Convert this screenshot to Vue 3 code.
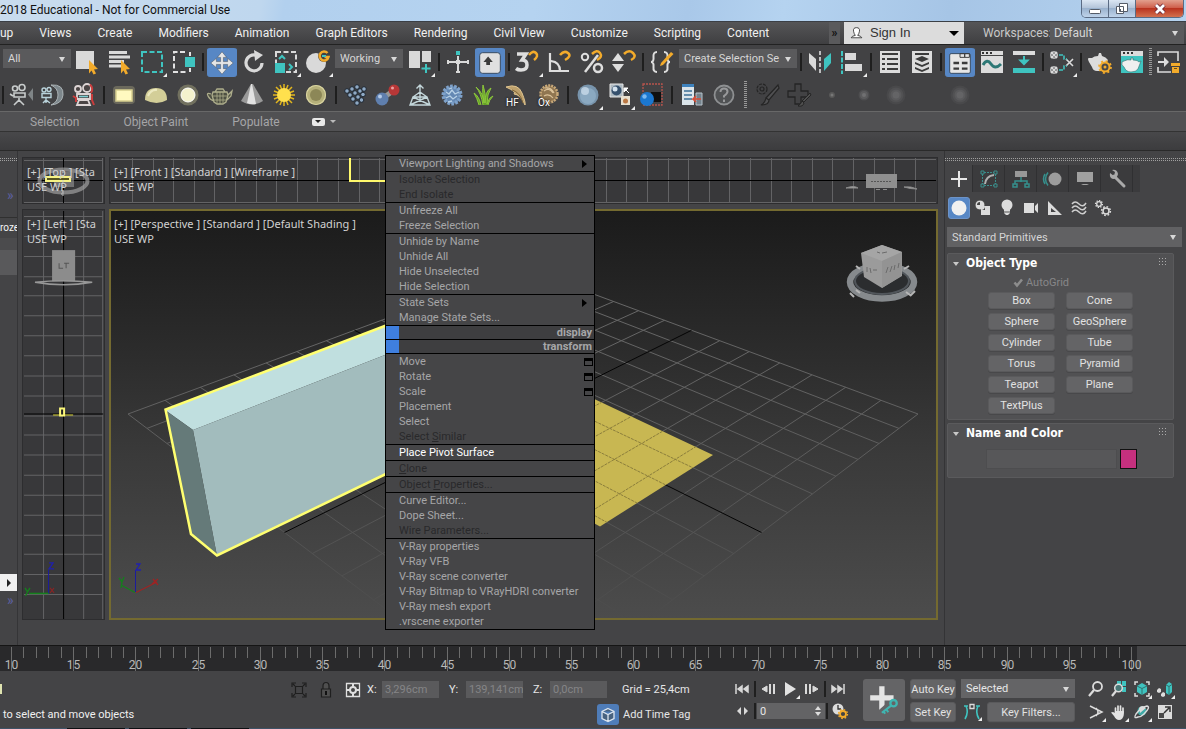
<script setup>
import { h } from 'vue'

const icons = {
  select: '<rect x="4" y="5" width="18" height="18" fill="#d9d9d9"/><path d="M17 14l9 9-4 .5 2 4-2.500 1-2-4-2.500 3z" fill="#f3ab2b"/>',
  selectName: '<path d="M5 6.500h18M5 11h21M5 15.500h15M5 20h15" stroke="#d9d9d9" stroke-width="3" fill="none"/><path d="M17 14l9 9-4 .5 2 4-2.500 1-2-4-2.500 3z" fill="#f3ab2b"/>',
  rect: '<rect x="6" y="6" width="20" height="20" fill="none" stroke="#3fc4c0" stroke-width="2" stroke-dasharray="5 2.500"/>',
  window: '<path d="M17 6H6v20h14M22 6v4M22 22v4" fill="none" stroke="#e2e2e2" stroke-width="2" stroke-dasharray="5 2.500"/><rect x="17" y="11" width="10" height="10" fill="#3fc4c0"/>',
  move: '<path d="M16 4l5 6h-3.500v4.500H22V11l6 5-6 5v-3.500h-4.500V22H21l-5 6-5-6h3.500v-4.500H10V21l-6-5 6-5v3.500h4.500V10H11z" fill="#e6e6e6" stroke="#4b5563" stroke-width=".6"/>',
  rotate: '<path d="M18.500 9.200A8 8 0 1 0 24 17" fill="none" stroke="#d9d9d9" stroke-width="3.200"/><path d="M16 4l9 5-8 6z" fill="#d9d9d9"/>',
  scale: '<rect x="6" y="6" width="20" height="20" fill="none" stroke="#d9d9d9" stroke-width="2" stroke-dasharray="5 2.500"/><rect x="5" y="17" width="10" height="10" fill="#3fc4c0"/><path d="M9 13l3-3 3 3M19 18l3 3-3 3" fill="none" stroke="#3fc4c0" stroke-width="2"/>',
  place: '<circle cx="14" cy="17" r="10" fill="#d9d9d9"/><circle cx="22" cy="10" r="6" fill="#424244"/><path d="M25.500 7A4.500 4.500 0 1 0 26.500 11h-4" fill="none" stroke="#f3ab2b" stroke-width="2.500"/><path d="M20 10h4" stroke="#3fc4c0" stroke-width="2"/>',
  pivot: '<path d="M5 5h11v17H5zM18 5h9v11h-9z" fill="#d9d9d9"/><path d="M22 18v9M17.500 22.500h9" stroke="#3fc4c0" stroke-width="2"/>',
  manip: '<path d="M16 10v17M5 16h22" stroke="#d9d9d9" stroke-width="2"/><path d="M14 5h4v4h-4z" fill="#3fc4c0"/><path d="M14 14h4v4h-4zM5 14h2v4H5zM25 14h2v4h-2zM14 25h4v2h-4z" fill="#d9d9d9"/>',
  kbd: '<rect x="5" y="5" width="22" height="22" rx="3" fill="#e0e0e0" stroke="#33465c"/><path d="M14 9l5 6h-3v3h-4v-3H9z" fill="#3b3b3b"/>',
  snap3: '<path d="M5 8h9l-4 6q5 0 5 5t-6 5q-3 0-5-1.500" fill="none" stroke="#dedede" stroke-width="3.500"/><path d="M17 9q4-5 7-2t-2 7" fill="none" stroke="#f3ab2b" stroke-width="2.500"/>',
  snapA: '<path d="M6 7v18h19M7 15q9 1 9 10" fill="none" stroke="#dedede" stroke-width="2.200"/><path d="M16 9q4-5 8-2t-3 7" fill="none" stroke="#f3ab2b" stroke-width="2.500"/>',
  snapP: '<circle cx="9" cy="11" r="3.200" fill="none" stroke="#dedede" stroke-width="2"/><circle cx="22" cy="22" r="4" fill="none" stroke="#dedede" stroke-width="2.500"/><path d="M22 9L9 26" stroke="#dedede" stroke-width="2.500"/><path d="M16 8q5-5 8-1t-3 7" fill="none" stroke="#f3ab2b" stroke-width="2.500"/>',
  snapS: '<path d="M10 7l6 8H4zM10 26l6-8H4z" fill="#dedede"/><path d="M16 8q5-5 9-1t-2 7" fill="none" stroke="#f3ab2b" stroke-width="2.500"/>',
  braces: '<path d="M11 6q-4 0-3.500 5T5 16q3 0 2.500 5t3.500 5M18 6q4 0 3.500 5t2.500 5q-3 0-2.500 5T18 26" fill="none" stroke="#dedede" stroke-width="2"/><path d="M15 17l10-11 2.500 2L17 19l-3 1z" fill="#f3ab2b"/>',
  mirror: '<path d="M5 7l7 6v12l-7-8z" fill="#d9d9d9"/><path d="M27 7l-7 6v12l7-8z" fill="#3fc4c0"/><path d="M16 5v23" stroke="#e8e8e8" stroke-width="1.500" stroke-dasharray="4 2"/>',
  align: '<path d="M6 5v23" stroke="#3fc4c0" stroke-width="2" stroke-dasharray="5 1.500"/><path d="M9 7h11v7H9zM9 18h17v7H9z" fill="#d9d9d9"/>',
  explorer: '<rect x="6" y="5" width="20" height="22" fill="#dcdcdc"/><path d="M8 8h16M8 13h3M13 13h11M8 18h3M13 18h11M8 23h3M13 23h11" stroke="#3b3b3b" stroke-width="2"/>',
  layers: '<rect x="6" y="5" width="20" height="22" fill="#dcdcdc"/><path d="M9 8h14" stroke="#3b3b3b" stroke-width="2"/><path d="M16 10l7 3-7 3-7-3zM9 16l7 3 7-3v2l-7 3-7-3zM9 21l7 3 7-3v2l-7 3-7-3z" fill="#3b3b3b"/>',
  ribbon: '<rect x="5" y="6" width="22" height="21" rx="1.500" fill="#e6e6e6" stroke="#33465c"/><path d="M16 6h5v4h-5zM21 6h5v4h-5z" fill="none" stroke="#3b3b3b"/><path d="M9 16h6M18 16h6M9 22h6M18 22h6" stroke="#3b3b3b" stroke-width="2.500"/>',
  curve: '<path d="M5 5h22v22H5z" fill="#dcdcdc"/><path d="M5 9.500h22" stroke="#444"/><path d="M6 6h2v2H6zM10 6h2v2h-2zM14 6h2v2h-2z" fill="#333"/><path d="M7 19q4-7 8-1t10 0" fill="none" stroke="#2c7775" stroke-width="3"/>',
  schem: '<path d="M5 5h22v4H5z" fill="#dcdcdc"/><path d="M5 22h22v5H5z" fill="#3fc4c0"/><path d="M16 10v6M12.500 14.500L16 18l3.500-3.500z" stroke="#3fc4c0" stroke-width="2" fill="#3fc4c0"/>',
  material: '<g fill="none" stroke="#dcdcdc" stroke-width="1.300"><circle cx="8" cy="9" r="3.200"/><circle cx="8" cy="24" r="3.200"/><path d="M5 6l6 6M5 12l6-6M5 21l6 6M5 27l6-6M20 13l7 7M20 20l7-7" stroke-width="1.600"/></g><path d="M13 9h5v4h3M13 24h5v-4h3" fill="none" stroke="#3fc4c0" stroke-width="1.600" stroke-dasharray="4 1.500"/>',
  renderSet: '<path d="M5 12q-2 0 0 4l3 5q1 4 5 4h4l7-11q-2-3-6-4l-1-3h-2l-1 3q-4 0-6 2z" fill="#dcdcdc"/><circle cx="21" cy="21" r="4.500" fill="#4a4a4a" stroke="#f3ab2b" stroke-width="2"/><circle cx="21" cy="21" r="1.500" fill="#f3ab2b"/><circle cx="21" cy="21" r="6" fill="none" stroke="#f3ab2b" stroke-width="1.800" stroke-dasharray="2 2.700"/>',
  renderWin: '<path d="M5 5h22v22H5z" fill="#3fc4c0"/><path d="M5 5h22v5H5z" fill="#dcdcdc"/><path d="M7 6h2v2H7zM11 6h2v2h-2zM15 6h2v2h-2z" fill="#333"/><path d="M8 15q4-2 7-1v-2h2v2q5 0 6 2l2-1-3 8q-2 3-7 3t-7-5q-3-2-2-5z" fill="#efefef" stroke="#2c6f6d" stroke-width=".6"/>',
  scenes: '<path d="M5 10V6h20v9M5 21v5h13" fill="none" stroke="#dcdcdc" stroke-width="1.600"/><path d="M5 15h6v-4l5 5-5 5v-4H5z" fill="#dcdcdc"/><path d="M18 17h9v3h-9zM19 21h7v6h-7z" fill="#f3ab2b"/><path d="M21 22.500h3" stroke="#6b4c12"/>',

  camera: '<g fill="none" stroke="#c8cccc" stroke-width="1.600"><circle cx="11" cy="9.500" r="2.500"/><circle cx="18" cy="8.500" r="3"/><path d="M10 14h11v4H10zM6 15l3 2M15 19v4M15 21l-5 5M15 21l5 5"/></g><path d="M29 9v13l-5-6.500z" fill="#7f8587"/>',
  cameraClip: '<path d="M15 6q13-1 12 10-1 9-12 10 7-3 7-10T15 6z" fill="#7d878c" stroke="#aab2b5"/><g fill="none" stroke="#b9d2da" stroke-width="1.400"><circle cx="8" cy="11" r="2"/><circle cx="13" cy="10.500" r="2"/><path d="M6 14.500h9v4H6zM10 19v5M7 24l3-3 4 3"/></g>',
  cameraRed: '<g fill="#4a4444" stroke="#dcd4d4" stroke-width="1.800"><circle cx="10" cy="10" r="3"/><circle cx="19" cy="9" r="4"/><path d="M9 15h13v5H9zM11 21h9l2 5H9z"/></g><path d="M22 5.500q4 4 1 8.500M24 15v6l2 5" fill="none" stroke="#c93c3c" stroke-width="2"/><path d="M5 17l3 2v4" fill="none" stroke="#c93c3c" stroke-width="2"/><path d="M11 17.500h9" stroke="#7ed0d3" stroke-width="1.600"/>',
  lightPlane: '<rect x="5" y="7" width="22" height="18" rx="4" fill="#fff7b0" opacity=".22"/><rect x="8" y="11" width="16" height="11" fill="#fff9c0" stroke="#d8cf90" stroke-width="1.500"/>',
  lightDome: '<path d="M5 21q0-12 11-12t11 12q-10 6-22 0z" fill="#d3ce98"/><path d="M8 17q3-7 9-6" fill="none" stroke="#ece9c0" stroke-width="2"/>',
  lightSphere: '<circle cx="16" cy="16" r="10.500" fill="#bbb88a" opacity=".4"/><circle cx="16" cy="16" r="7" fill="#f4f2cd" stroke="#fff"/>',
  teapot: '<path d="M9 13h14l1 3-2 7-3 2h-6l-3-2-2-7zM13 10h6l2 3H11zM7 15q-5-2-3 2t6 5M24 16l4-4-1 5-4 4" fill="#4e5043" stroke="#aeae8c" stroke-width="1.300"/><path d="M8 17h16M9 21h14M13 13v11M16 13v12M19 13v11" stroke="#aeae8c" stroke-width=".8"/>',
  cone: '<path d="M15 5h2l10 17q-10 7-22 0z" fill="#999"/><path d="M15 5h1l4 20q-5 1-9-1z" fill="#e2e2e2"/>',
  sun: '<g stroke="#e2b61e" stroke-width="1.500"><path d="M16 5v22M5 16h22M8 8l16 16M24 8L8 24M12 6l8 20M20 6l-8 20M6 12l20 8M6 20l20-8"/></g><circle cx="16" cy="16" r="7" fill="#ffe04d"/>',
  disc: '<circle cx="16" cy="16" r="10" fill="#b5b07a"/><circle cx="16" cy="16" r="6" fill="#8c8757"/><circle cx="16" cy="16" r="9.500" fill="none" stroke="#d8d3a0" stroke-width="1.200"/>',
  dots: '<g stroke="#1f2833" fill="#8fa9c4"><circle cx="7" cy="12" r="2.300"/><circle cx="12" cy="10" r="2.300"/><circle cx="17" cy="8" r="2.300"/><circle cx="10" cy="16" r="2.300"/><circle cx="15" cy="14" r="2.300"/><circle cx="20" cy="12" r="2.300"/><circle cx="13" cy="20" r="2.300"/><circle cx="18" cy="18" r="2.300"/><circle cx="24" cy="10" r="2.300"/><circle cx="23" cy="15.500" r="2.300"/><circle cx="17" cy="24" r="2.300"/><circle cx="21.500" cy="21" r="2.300"/></g>',
  mol: '<path d="M10 20L22 11" stroke="#999" stroke-width="5"/><circle cx="10" cy="20" r="6.500" fill="#5f7fae"/><circle cx="22" cy="11" r="5.500" fill="#b73737"/><circle cx="8" cy="17.500" r="2" fill="#b5cbe8"/><circle cx="20.500" cy="9" r="1.500" fill="#e9a0a0"/>',
  pyramid: '<path d="M9 18h14l3 8H6zM9 18l17 8M23 18L6 26M16 22V6M12.500 9.500L16 6l3.500 3.500M9 18l7-5 7 5" fill="none" stroke="#c3d6da" stroke-width="1.400"/>',
  fur: '<circle cx="16" cy="16" r="9" fill="#6488b3"/><circle cx="16" cy="16" r="8.500" fill="none" stroke="#7fa2ca" stroke-width="4" stroke-dasharray="2.500 1.300"/><path d="M10 13l3 2 3-4 3 4 4-2M10 19l4-2 3 3 4-3M13 10l3-1M12 23l4-1" fill="none" stroke="#b8d1e6" stroke-width="1.300"/>',
  grass: '<path d="M15 26Q13 14 8 8q8 7 8 16Q14 12 15 6q3 8 2 18 0-12 6-15-4 6-4 16 2-7 6-8-4 4-5 9M13 26Q11 17 6 14q3 5 5 12" fill="#66a127" stroke="#8cc63c"/>',
  hair: '<path d="M6 8q12-4 16 6t3 12q-2-5-5-8t-6-3q3-2-8-7z" fill="#bda06c" stroke="#dfc48f"/><path d="M12 11q8 2 11 13" fill="none" stroke="#7c6236"/>',
  ox: '<circle cx="17" cy="15" r="8.500" fill="#907651"/><circle cx="17" cy="15" r="8.500" fill="none" stroke="#c8a878" stroke-width="2.500" stroke-dasharray="2 1"/><path d="M12 12q5-4 9 2M12 17q5-3 9 2M13 9q6-1 9 5" fill="none" stroke="#dcc39a" stroke-width="1.200"/>',
  sphere: '<circle cx="16" cy="16" r="10.500" fill="#7894ac"/><circle cx="16" cy="17" r="8" fill="#8ba9c1"/><circle cx="13" cy="12" r="4" fill="#c8dae8" opacity=".8"/>',
  convert: '<path d="M6 5h13v13H6z" fill="#aeb9c1" stroke="#e6e6e6"/><circle cx="12.500" cy="11.500" r="5" fill="#35506d"/><circle cx="11" cy="10" r="2.500" fill="#d5e3ef"/><path d="M17 17h9v9h-9z" fill="#e7dfcf"/><circle cx="21.500" cy="22" r="2.500" fill="#bb7844"/><path d="M20 9h4l-4 4zM21 10l4 4" stroke="#fff" fill="#fff"/>',
  frame: '<path d="M7 5h19v21H7z" fill="none" stroke="#b8544c" stroke-width="1.300" stroke-dasharray="2 1"/><path d="M15 13h10v10H15z" fill="#101010"/><circle cx="11" cy="20" r="7" fill="#1b77cf"/><circle cx="8.500" cy="17.500" r="2.200" fill="#7ab8f0"/>',
  doc: '<path d="M6 5h12v21H6z" fill="#dbe4ea"/><path d="M6 5h12v3H6z" fill="#3e82bd"/><path d="M8 12h8M8 16h8M8 20h8" stroke="#3e6f96" stroke-width="1.500"/><path d="M20 14h6v12h-6z" fill="#74828c" stroke="#b7c3cb"/><path d="M25 20h-8l3-3M17 20l3 3" stroke="#d94c36" stroke-width="1.600" fill="none"/>',
  help: '<circle cx="16" cy="16" r="9.500" fill="#505254" stroke="#8e9092" stroke-width="1.800"/><path d="M12.500 13q0-3.500 3.500-3.500t3.500 3q0 2-3.500 4.500v1.500M16 20.500v2.500" fill="none" stroke="#98999b" stroke-width="2"/>',
  tools: '<g fill="none" stroke="#252525" stroke-width="1.200"><circle cx="10" cy="10" r="2"/><circle cx="10" cy="10" r="5" stroke-dasharray="3 1"/><path d="M26 6l1 3-10 12-3-2zM14 19l3 2q0 5-8 5 4-2 5-7z" fill="#505052"/></g>',
  plusBrush: '<path d="M11 5h6v7h7v6h-7v7h-6v-7H4v-6h7z" fill="none" stroke="#252525" stroke-width="1.300"/><path d="M26 14l1 2-7 7-2-1zM18 22l2 2q-1 4-6 3 3-2 4-5z" fill="#505050" stroke="#252525"/>',
  blur1: '<circle cx="16" cy="16" r="3" fill="#585858"/><circle cx="16" cy="16" r="1.500" fill="#777"/>',
  blur2: '<circle cx="16" cy="16" r="5.500" fill="#4e4e50"/><circle cx="16" cy="16" r="4" fill="#5c5c5e"/><circle cx="16" cy="16" r="2" fill="#707072"/>',
  blur3: '<circle cx="16" cy="16" r="9.500" fill="#49494b"/><circle cx="16" cy="16" r="7.500" fill="#515153"/><circle cx="16" cy="16" r="5.500" fill="#5a5a5c"/><circle cx="16" cy="16" r="3.500" fill="#646466"/>',

  plus: '<path d="M16 8v16M8 16h16" stroke="#e8e8e8" stroke-width="2"/>',
  modify: '<g fill="none" stroke="#3b8e8b"><path d="M11 9.500h10M11 22.500h10M9.500 11v10M22.500 11v10" stroke-dasharray="2 1"/><path d="M8 8h3v3H8zM21 8h3v3h-3zM8 21h3v3H8zM21 21h3v3h-3z"/></g><path d="M12 21q1-8 9-9" fill="none" stroke="#b0b0b0" stroke-width="2"/>',
  hier: '<path d="M10 8h12v6H10z" fill="#989898"/><path d="M16 14v5M10 21v-3h12v3M8 21h4v3H8zM20 21h4v3h-4z" fill="none" stroke="#36908d" stroke-width="1.500"/>',
  motion: '<circle cx="18" cy="16" r="6.500" fill="#9c9c9c"/><path d="M11 9.500q-5 6.500 0 13M8 11q-3 5 0 10" fill="none" stroke="#36908d" stroke-width="1.500"/>',
  display: '<path d="M8 9h16v10H8zM12 22h8l-2-1h-4z" fill="#a0a0a0"/>',
  wrench: '<path d="M13 13l10 10" stroke="#aaa" stroke-width="3" stroke-linecap="round"/><path d="M9 10l4 3 1-4-3-2q5-1 6 4-1 5-5 5-4-1-3-6z" fill="#aaa"/>',
  geo: '<circle cx="16" cy="16" r="7.500" fill="#f0f0f0"/>',
  shapes: '<circle cx="13" cy="13" r="5" fill="#dcdcdc" stroke="#444"/><path d="M14 14h9v9h-9z" fill="#dcdcdc"/><path d="M14 18q4 0 4-4v4z" fill="#444"/><path d="M10 13q0-3 3-3v3z" fill="#444"/>',
  bulb: '<circle cx="16" cy="13" r="5.500" fill="#dcdcdc"/><path d="M13 17h6v4l-2 2h-2l-2-2z" fill="#dcdcdc"/><path d="M13 20h6" stroke="#555"/>',
  cam: '<path d="M9 11h10v10H9zM20 14l3-3v10l-3-3z" fill="#dcdcdc"/>',
  tape: '<path d="M9 9v14h14zM12 16v4h5z" fill="#dcdcdc" fill-rule="evenodd"/>',
  waves: '<path d="M9 12q3-4 7 0t7-1M9 16q3-4 7 0t7-1M9 20q3-4 7 0t7-1" fill="none" stroke="#cfcfcf" stroke-width="1.500"/>',
  gears: '<g fill="none" stroke="#dcdcdc"><circle cx="12" cy="12" r="2.300" stroke-width="1.300"/><circle cx="12" cy="12" r="3.400" stroke-width="1.400" stroke-dasharray="1.300 1.300"/><circle cx="19" cy="19" r="3" stroke-width="1.500"/><circle cx="19" cy="19" r="4.400" stroke-width="1.500" stroke-dasharray="1.700 1.750"/></g>',

  isolate: '<path d="M9 13V9h4M19 9h4v4M23 19v4h-4M13 23H9v-4M12.500 12.500h7v7h-7zM10 10l2 2M22 10l-2 2M22 22l-2-2M10 22l2-2" fill="none" stroke="#1f1f1f" stroke-width="1.200"/>',
  lock: '<path d="M13 15v-3q0-3.500 3-3.500t3 3.500v3M11.500 15h9v8h-9z" fill="#4f4f4f" stroke="#1f1f1f" stroke-width="1.200"/><path d="M16 17v4" stroke="#111" stroke-width="2"/>',
  abs: '<path d="M9.500 9.500h13v13h-13z" fill="#444" stroke="#e0e0e0" stroke-width="1.300"/><circle cx="16" cy="16" r="3" fill="none" stroke="#e0e0e0" stroke-width="2"/><path d="M16 10v3M16 19v3M10 16h3M19 16h3" stroke="#e0e0e0" stroke-width="2"/>',
  tag: '<path d="M16 9.500l6 3v7l-6 3-6-3v-7zM10 12.500l6 3 6-3M16 15.500v7" fill="#48627f" stroke="#dde6f0" stroke-width="1.300"/>',
  first: '<path d="M10 11v10M16 13v6l-4-3zM22 13v6l-4-3z" fill="#d9d9d9" stroke="#d9d9d9" stroke-width="1.500"/>',
  prev: '<path d="M15 13v6l-5-3z" fill="#d9d9d9" stroke="#d9d9d9"/><path d="M18 11v10M22 11v10" stroke="#d9d9d9" stroke-width="2"/>',
  play: '<path d="M11 9l11 7-11 7z" fill="#e2e2e2"/>',
  next: '<path d="M17 13v6l5-3z" fill="#d9d9d9" stroke="#d9d9d9"/><path d="M10 11v10M14 11v10" stroke="#d9d9d9" stroke-width="2"/>',
  last: '<path d="M22 11v10M16 13v6l4-3zM10 13v6l4-3z" fill="#d9d9d9" stroke="#d9d9d9" stroke-width="1.500"/>',
  keymode: '<path d="M15 12v8l-4-4zM18 12v8l4-4z" fill="#d9d9d9"/>',
  clock: '<circle cx="14" cy="14" r="5.500" fill="#dcdcdc"/><path d="M14 10v4h3" fill="none" stroke="#333" stroke-width="1.300"/><circle cx="19" cy="19" r="3" fill="#444" stroke="#f3ab2b" stroke-width="1.800"/><circle cx="19" cy="19" r="4.500" fill="none" stroke="#f3ab2b" stroke-width="1.300" stroke-dasharray="1.700 1.830"/>',
  curveKey: '<path d="M9 23q4-7 1-13M23 23q-4-7-1-13M8 10h4M20 10h4" fill="none" stroke="#3fc4c0" stroke-width="1.600"/><path d="M14 8.500h4v4h-4z" fill="none" stroke="#dcdcdc" stroke-width="1.300"/>',
  zoom: '<circle cx="17.500" cy="13.500" r="4.500" fill="none" stroke="#dcdcdc" stroke-width="1.800"/><path d="M14 17l-5 6" stroke="#dcdcdc" stroke-width="2.200"/>',
  zoomAll: '<path d="M14 8h4v5h-4zM19 8h4v5h-4zM19 14h4v5h-4z" fill="#3fc4c0"/><circle cx="15.500" cy="15" r="3.800" fill="#497776" stroke="#dcdcdc" stroke-width="1.500"/><path d="M13 18l-4 5" stroke="#dcdcdc" stroke-width="2.200"/>',
  extents: '<path d="M9 12V9h3M20 9h3v3M23 20v3h-3M12 23H9v-3" fill="none" stroke="#dcdcdc" stroke-width="1.500"/><path d="M16 10l5 3v6l-5 3-5-3v-6z" fill="#3fc4c0"/><path d="M11 13l5 2.500 5-2.500M16 15.500V22" fill="none" stroke="#31706e"/>',
  extSel: '<path d="M17 12l3-3 3 2v8l-3 3-3-2z" fill="#3fc4c0"/><path d="M17 12l3 1.500 3-2M20 13.500V22" fill="none" stroke="#31706e"/><path d="M8 17l2-2 2 1v3l-2 1-2-1zM12 21l2-2 2 1v3l-2 1-2-1z" fill="#dcdcdc"/>',
  fov: '<path d="M10 10l12 6-12 6M16 12q4 4 0 8" fill="none" stroke="#dcdcdc" stroke-width="1.500"/>',
  hand: '<path d="M12.500 17v-5M15 16v-6M17.500 16v-6M20 17v-5" stroke="#e2e2e2" stroke-width="1.700" stroke-linecap="round"/><path d="M12 15h8.800v4q-1 5-4.800 5-3 0-5-4l-3-3.500 2-.5 2 1z" fill="#e2e2e2"/>',
  orbit: '<circle cx="16" cy="15" r="4.500" fill="#3fa9a6"/><path d="M13 12q3-4 7 0l-6 5z" fill="#dcdcdc"/><path d="M12 21q-5 2-2-3 5-7 11-8 4 1-3 8-3 3-6 3z" fill="none" stroke="#dcdcdc" stroke-width="1.400"/>',
  maxi: '<path d="M9 9h14v14H9z" fill="#dcdcdc"/><path d="M10 17h5v5h-5z" fill="#4a4a4a"/><path d="M15 17l5-5M16 11h5v5" fill="none" stroke="#333" stroke-width="1.500"/>',
  bigKey: '<path d="M14 3v22M3 14h22" stroke="#e4e4e4" stroke-width="5"/><path d="M22 20l-8 7" stroke="#646466" stroke-width="6"/><circle cx="25" cy="19" r="3" fill="#646466" stroke="#3fb5b1" stroke-width="2.200"/><path d="M23 21l-9 7M18 24.500l2 3M15.500 26.500l1.500 2.500" stroke="#3fb5b1" stroke-width="2" fill="none"/>',
  user: '<path d="M16 7q6 0 5 6-1 5-3 7 6 1 7 4H7q1-3 7-4-2-2-3-7-1-6 5-6z" fill="#fff" stroke="#222" stroke-width="1.300"/>',
}
const Icon = (props) =>
  h('svg', { viewBox: '0 0 32 32', 'aria-hidden': 'true', innerHTML: icons[props.name] })
Icon.props = ['name']

const menus = ['up', 'Views', 'Create', 'Modifiers', 'Animation', 'Graph Editors', 'Rendering', 'Civil View', 'Customize', 'Scripting', 'Content']

const mainTools = [
  { sel: 'All', cls: 'w-all', label: 'Selection filter' },
  { i: 'select' }, { i: 'selectName' }, { i: 'rect', fly: 1 }, { i: 'window' }, { sep: 1 },
  { i: 'move', on: 1 }, { i: 'rotate' }, { i: 'scale', fly: 1 }, { i: 'place', fly: 1 },
  { sel: 'Working', cls: 'w-work', label: 'Reference coordinates' },
  { i: 'pivot', fly: 1 }, { sep: 1 }, { i: 'manip' }, { i: 'kbd', on: 1 }, { sep: 1 },
  { i: 'snap3', fly: 1 }, { i: 'snapA' }, { i: 'snapP' }, { i: 'snapS' }, { sep: 1 }, { i: 'braces' },
  { sel: 'Create Selection Se', cls: 'w-set', label: 'Named selection sets' },
  { sep: 1 }, { i: 'mirror' }, { i: 'align', fly: 1 }, { sep: 1 }, { i: 'explorer' }, { i: 'layers' }, { sep: 1 },
  { i: 'ribbon', on: 1 }, { i: 'curve' }, { i: 'schem' }, { sep: 1 }, { i: 'material', fly: 1 }, { sep: 1 },
  { i: 'renderSet' }, { i: 'renderWin' }, { dots: 1 }, { i: 'scenes' },
]
const objectTools = [
  { sep: 1, tight: 1 }, { i: 'camera' }, { i: 'cameraClip' }, { i: 'cameraRed' }, { sep: 1 },
  { i: 'lightPlane' }, { i: 'lightDome' }, { i: 'lightSphere' }, { i: 'teapot' }, { i: 'cone' }, { i: 'sun' }, { i: 'disc' }, { sep: 1 },
  { i: 'dots' }, { i: 'mol' }, { i: 'pyramid' }, { i: 'fur' }, { i: 'grass' },
  { i: 'hair', cap: 'HF' }, { i: 'ox', cap: 'Ox' }, { sep: 1 },
  { i: 'sphere', fly: 1 }, { i: 'convert', fly: 1 }, { i: 'frame' }, { sep: 1 },
  { i: 'doc' }, { i: 'help' }, { dots: 1 }, { i: 'tools' }, { i: 'plusBrush' }, { i: 'blur1' }, { i: 'blur2' }, { i: 'blur3' }, { gap: 1 }, { i: 'blur3' },
]

const menuTop = [
  [{ t: 'Viewport Lighting and Shadows', sub: 1 }],
  [{ t: 'Isolate Selection', off: 1 }, { t: 'End Isolate', off: 1 }],
  [{ t: 'Unfreeze All' }, { t: 'Freeze Selection' }],
  [{ t: 'Unhide by Name' }, { t: 'Unhide All' }, { t: 'Hide Unselected' }, { t: 'Hide Selection' }],
  [{ t: 'State Sets', sub: 1 }, { t: 'Manage State Sets...' }],
  'display', 'transform',
  [{ t: 'Move', box: 1 }, { t: 'Rotate', box: 1 }, { t: 'Scale', box: 1 }, { t: 'Placement' }, { t: 'Select' }, { t: 'Select Similar', off: 1, u: 7 }],
  [{ t: 'Place Pivot Surface', hot: 1 }],
  [{ t: 'Clone', off: 1, u: 0 }],
  [{ t: 'Object Properties...', off: 1, u: 7 }],
  [{ t: 'Curve Editor...' }, { t: 'Dope Sheet...' }, { t: 'Wire Parameters...', off: 1 }],
  [{ t: 'V-Ray properties' }, { t: 'V-Ray VFB' }, { t: 'V-Ray scene converter' }, { t: 'V-Ray Bitmap to VRayHDRI converter' }, { t: 'V-Ray mesh export' }, { t: '.vrscene exporter' }],
]

// Perspective ground grid: p runs left to right, q runs far to near
const project = (u, v) => {
  const p = (u - v) / 2
  const q = (u + v) / 2
  const d = 1 - 0.3438 * q
  return [523 + (395 * p) / d, (414 + 53.9 * q) / d]
}
const seg = (a, b) => `M${a[0].toFixed(1)} ${a[1].toFixed(1)}L${b[0].toFixed(1)} ${b[1].toFixed(1)}`
let groundGrid = ''
for (let k = -7; k <= 7; k++) {
  if (k === 0) continue
  groundGrid += seg(project(k / 7, -1), project(k / 7, 1)) + seg(project(-1, k / 7), project(1, k / 7))
}
const groundAxes = seg(project(0, -1), project(0, 1)) + seg(project(-1, 0), project(1, 0))

const range = (a, b, s) => Array.from({ length: Math.floor((b - a) / s) + 1 }, (_, i) => a + i * s)
const frontGrid = range(132, 934, 20.6).map((x) => `M${Math.round(x)}.5 158V203`).join('')
const leftGrid = range(216, 612, 19.85).map((y) => `M24 ${Math.round(y)}.5H103`).join('')

const ticks = Array.from({ length: 91 }, (_, i) => ({ n: i + 10, x: Math.round(11 + (i * 1120) / 90) + 0.5 }))

const primitives = ['Box', 'Cone', 'Sphere', 'GeoSphere', 'Cylinder', 'Tube', 'Torus', 'Pyramid', 'Teapot', 'Plane', 'TextPlus']
const panelTabs = ['plus', 'modify', 'hier', 'motion', 'display', 'wrench']
const categories = ['geo', 'shapes', 'bulb', 'cam', 'tape', 'waves', 'gears']
const coords = [['X', '3,296cm'], ['Y', '139,141cm'], ['Z', '0,0cm']]
const nav = [['zoom'], ['zoomAll'], ['extents', 1], ['extSel', 1], ['fov', 1], ['hand', 1], ['orbit', 1], ['maxi']]
</script>

<template>
  <div class="app">
    <header class="title">
      <span class="title-text">2018 Educational - Not for Commercial Use</span>
      <div class="win">
        <button aria-label="Minimize"><svg viewBox="0 0 14 12"><rect x="1.500" y="6.500" width="11" height="4" rx="1" fill="#fff" stroke="#555c68" /></svg></button>
        <button aria-label="Restore"><svg viewBox="0 0 14 12"><path d="M4.500 .5h8v8h-8zM1.500 3.500h7v7h-7z" fill="#fff" stroke="#555c68" /><path d="M4 6h2v2H4z" fill="#555c68" /></svg></button>
        <button class="close" aria-label="Close"><svg viewBox="0 0 14 12"><path d="M3 2l8 8M11 2l-8 8" stroke="#623" stroke-width="4.500" /><path d="M3 2l8 8M11 2l-8 8" stroke="#fff" stroke-width="2.800" /></svg></button>
      </div>
    </header>

    <nav class="menubar">
      <button v-for="m in menus" :key="m" class="item">{{ m }}</button>
      <span class="grow"></span>
      <button class="more">»</button>
      <button class="signin"><Icon name="user" />Sign In<i class="tri"></i></button>
      <label class="ws-label" for="ws">Workspaces:</label>
      <span class="drop ws"><select id="ws"><option>Default</option></select></span>
    </nav>

    <div v-for="(row, r) in [mainTools, objectTools]" :key="r" class="tools" :class="{ second: r }">
      <template v-for="(t, k) in row" :key="k">
        <span v-if="t.sel" class="drop" :class="t.cls"><select :aria-label="t.label"><option>{{ t.sel }}</option></select></span>
        <span v-else-if="t.sep" class="sep" :class="{ tight: t.tight }"></span>
        <span v-else-if="t.dots" class="grip"></span>
        <span v-else-if="t.gap" class="tool"></span>
        <button v-else class="tool" :class="{ on: t.on, fly: t.fly }" :aria-label="t.i"><Icon :name="t.i" /><b v-if="t.cap">{{ t.cap }}</b></button>
      </template>
    </div>

    <div class="ribbon">
      <button>Selection</button><button>Object Paint</button><button>Populate</button>
      <button class="pill" aria-label="Ribbon display"><i></i></button><i class="mini"></i>
    </div>
    <div class="ribbon-foot"></div>

    <main class="main">
      <aside class="left">
        <div class="hgrip"></div>
        <span class="chev c1">»</span>
        <div class="frozen">roze</div>
        <div class="band"></div>
        <span class="grow"></span>
        <button class="expand" aria-label="Expand"><i></i></button>
        <span class="chev c2">»</span>
      </aside>

      <section class="views">
        <div class="view">
          <svg viewBox="22 157 83 47" preserveAspectRatio="xMinYMin slice">
            <path d="M43.500 158V204M83.500 158V204M102.500 158V204M24 160.500H103M24 202.500H103" class="grid" />
            <path d="M63.500 158V204M24 180.500H103" stroke="#000" />
            <ellipse cx="63.500" cy="181" rx="24" ry="11.500" fill="none" stroke="#a0a0a0" stroke-width="4" opacity=".7" />
            <path d="M54 172h20v15H54z" fill="#999" opacity=".6" />
            <path d="M46 177h24v4H46z" fill="#57551f" stroke="#f6f384" stroke-width="2" />
            <path d="M63 170v26M61 194h5" stroke="#ccc" stroke-dasharray="3 2" />
          </svg>
          <p>[+] [Top ] [Sta<br>USE WP</p>
        </div>
        <div class="view">
          <svg viewBox="109 157 829 47" preserveAspectRatio="xMinYMin slice">
            <path :d="frontGrid + 'M111 159.500H936M111 202.500H936'" class="grid" />
            <path d="M111 180.500H936" stroke="#000" />
            <path d="M350 158V181H390" fill="none" stroke="#fff96c" stroke-width="2" />
            <path d="M866 174h31v14h-31z" fill="#8f8f8f" /><path d="M871 181.500h21" stroke="#555" stroke-dasharray="2 1" />
            <path d="M846 188q8-3 12 0zM904 187q7-1 13 2-7 0-13-2zM876 189.500h4M883 189.500h4" fill="#aaa" stroke="#8a8a8a" />
          </svg>
          <p>[+] [Front ] [Standard ] [Wireframe ]<br>USE WP</p>
        </div>
        <div class="view">
          <svg viewBox="22 209 83 410" preserveAspectRatio="xMinYMin slice">
            <path :d="leftGrid + 'M43.500 211V618M83.500 211V618M102.500 211V618'" class="grid" />
            <path d="M63.500 211V618M24 413.500H103" stroke="#000" />
            <path d="M52 250h23v31H52z" fill="#8c8c8c" /><path d="M59 263v5h4M66 263v5M64 263h5" fill="none" stroke="#555" />
            <path d="M35 282q28-3 57 0-28 5-57 0z" fill="none" stroke="#989898" stroke-width="1.500" />
            <path d="M53 414.500h20" stroke="#d8d332" /><path d="M60 408h4v7h-4z" fill="#222" stroke="#fbf779" stroke-width="2" />
            <path d="M48.500 593V569" stroke="#1c1c9c" /><path d="M48.500 592.500H29" stroke="#14801c" stroke-width="1.500" />
            <path d="M49 562h4l-4 6h5" fill="none" stroke="#1f1fae" stroke-width="1.300" /><path d="M25 587l2.500 4 2.500-4M27.500 591l-2 4" fill="none" stroke="#14801c" stroke-width="1.300" /><path d="M50 587l4 5M54 587l-4 5" stroke="#8c2323" />
          </svg>
          <p>[+] [Left ] [Sta<br>USE WP</p>
        </div>
        <div class="view active">
          <svg viewBox="111 211 825 407" preserveAspectRatio="xMinYMin slice">
            <defs>
              <linearGradient id="fade" gradientUnits="userSpaceOnUse" x1="0" y1="280" x2="0" y2="620">
                <stop offset="0" stop-color="#686868" /><stop offset=".4" stop-color="#606060" /><stop offset=".7" stop-color="#555" /><stop offset="1" stop-color="#4b4b4b" />
              </linearGradient>
              <clipPath id="plane"><path d="M590 397L713 455 600 526.500 590 521z" /></clipPath>
            </defs>
            <path :d="groundGrid" stroke="url(#fade)" fill="none" />
            <path :d="groundAxes" stroke="#050505" fill="none" />
            <path d="M590 397L713 455 600 526.500 590 521z" fill="#c8b752" />
            <g clip-path="url(#plane)"><path :d="groundGrid + groundAxes" stroke="#8b7e3c" stroke-dasharray="3 1" fill="none" /></g>
            <path d="M165 410L390 324V353L193 430z" fill="#c0dfdf" />
            <path d="M193 430L390 353V472L217 556z" fill="#a2bcbd" />
            <path d="M165 410l28 20 24 126-26-22z" fill="#657a79" />
            <path d="M390 324L165.500 409.500 191 534l26 21.500L390 472" fill="none" stroke="#ffff70" stroke-width="2.500" />
            <ellipse cx="882" cy="282" rx="32" ry="16.500" fill="#2b2d2f" stroke="#868a8d" stroke-width="6.500" />
            <ellipse cx="882" cy="281" rx="27" ry="13" fill="none" stroke="#51565b" stroke-width="2" />
            <path d="M856 266l4 3M904 269l5-3M850 293l4 4M856 290l4 3M910 296l5-5M906 292l4 3" stroke="#b6b6b6" stroke-width="2" />
            <path d="M861 253l21-8 20 7v24l-20 12-18-11z" fill="#9b9b9b" />
            <path d="M861 253l21-8 20 7-20 9z" fill="#a5a5a5" /><path d="M882 261l20-9-1 24-19 12z" fill="#939393" />
            <path d="M877 252l3 1M882 253l5-1M867 267v5M870 268l1 5M873 270h4M886 273l2-6M890 272l2-6M894 270l1-5M898 268l1-5" stroke="#6b6b6b" />
            <path d="M135.500 592V570" stroke="#1c1c9c" /><path d="M136 564h4l-4 6h5" fill="none" stroke="#2020b0" stroke-width="1.300" />
            <path d="M136 592.500L157 582M153 579l5 6M158 579l-6 5" stroke="#9d2424" fill="none" stroke-width="1.300" />
            <path d="M135 592.500l-13-7M119 578l3 4 2-5M122 582l-1 6" stroke="#14801c" fill="none" stroke-width="1.300" />
          </svg>
          <p>[+] [Perspective ] [Standard ] [Default Shading ]<br>USE WP</p>
        </div>
      </section>

      <aside class="panel">
        <div class="hgrip"></div>
        <div class="tabs"><button v-for="(t, k) in panelTabs" :key="t" :class="{ cur: k === 0 }" :aria-label="t"><Icon :name="t" /></button></div>
        <div class="cats"><button v-for="(t, k) in categories" :key="t" :class="{ cur: k === 0 }" :aria-label="t"><Icon :name="t" /></button></div>
        <span class="drop prim"><select aria-label="Primitive set"><option>Standard Primitives</option></select></span>
        <div class="roll">
          <h2><i></i>Object Type<span></span></h2>
          <label class="auto"><input type="checkbox" checked disabled><svg viewBox="0 0 10 10"><path d="M1.500 4.500l2.500 3 5-6" fill="none" stroke="#8d8d8d" stroke-width="2.500" /></svg>AutoGrid</label>
          <div class="prims"><button v-for="p in primitives" :key="p">{{ p }}</button></div>
        </div>
        <div class="roll">
          <h2><i></i>Name and Color<span></span></h2>
          <div class="name"><input type="text" aria-label="Object name"><button aria-label="Object color"></button></div>
        </div>
      </aside>
    </main>

    <div class="timeline">
      <svg viewBox="0 0 1137 25" preserveAspectRatio="xMinYMin meet">
        <path v-for="t in ticks" :key="t.n" :d="`M${t.x} 1V${t.n % 5 ? 12 : 25}`" stroke="#6c6c6c" />
        <template v-for="t in ticks" :key="t.n"><text v-if="t.n % 5 === 0" :x="t.x" y="23">{{ t.n }}</text></template>
      </svg>
    </div>

    <footer class="status">
      <div class="prompt"><span class="caret"></span><p>to select and move objects</p></div>
      <div class="coords">
        <div class="line">
          <button class="sm" aria-label="Isolate"><Icon name="isolate" /></button><button class="sm" aria-label="Lock"><Icon name="lock" /></button><button class="sm" aria-label="Absolute"><Icon name="abs" /></button>
          <template v-for="c in coords" :key="c[0]"><label :for="'c' + c[0]">{{ c[0] }}:</label><input :id="'c' + c[0]" type="text" :value="c[1]" disabled></template>
          <span class="gridsize">Grid = 25,4cm</span>
        </div>
        <div class="line tagline"><button class="tag" aria-label="Time tag"><Icon name="tag" /></button><span>Add Time Tag</span></div>
      </div>
      <div class="play">
        <div class="line"><button class="sm" aria-label="First"><Icon name="first" /></button><i class="vs"></i><button class="sm" aria-label="Previous"><Icon name="prev" /></button><button class="sm fly" aria-label="Play"><Icon name="play" /></button><button class="sm" aria-label="Next"><Icon name="next" /></button><i class="vs"></i><button class="sm" aria-label="Last"><Icon name="last" /></button></div>
        <div class="line"><button class="sm" aria-label="Key mode"><Icon name="keymode" /></button><i class="vs"></i><span class="spin"><input type="text" value="0" aria-label="Frame"><i class="up"></i><i class="dn"></i></span><i class="vs"></i><button class="sm" aria-label="Time configuration"><Icon name="clock" /></button></div>
      </div>
      <button class="big" aria-label="Set keys"><Icon name="bigKey" /></button>
      <div class="keys">
        <button class="key">Auto Key</button><span class="drop"><select aria-label="Key target"><option>Selected</option></select></span>
        <button class="key">Set Key</button><div class="kf"><button class="sm fly" aria-label="Tangent"><Icon name="curveKey" /></button><button class="key">Key Filters...</button></div>
      </div>
      <div class="nav"><button v-for="n in nav" :key="n[0]" class="sm" :class="{ fly: n[1] }" :aria-label="n[0]"><Icon :name="n[0]" /></button></div>
    </footer>
    <div class="taskbar"><i></i><i></i><i></i></div>

    <div class="quad" role="menu">
      <template v-for="(g, k) in menuTop" :key="k">
        <div v-if="typeof g === 'string'" class="qhead">{{ g }}</div>
        <div v-else class="qgroup">
          <button v-for="it in g" :key="it.t" role="menuitem" :class="{ off: it.off, hot: it.hot }">
            <template v-if="it.u !== undefined">{{ it.t.slice(0, it.u) }}<u>{{ it.t[it.u] }}</u>{{ it.t.slice(it.u + 1) }}</template>
            <template v-else>{{ it.t }}</template>
            <i v-if="it.sub" class="sub"></i><i v-if="it.box" class="box"></i>
          </button>
        </div>
      </template>
    </div>
  </div>
</template>

<style>
body { background: #444446; }
</style>

<style scoped>
* { box-sizing: border-box; margin: 0; }
.app { position: relative; display: flex; flex-direction: column; height: 100vh; overflow: hidden; background: #444446; color: #d6d6d6; font: 11px/15px Roboto, "Noto Sans", sans-serif; }
button, input, select { font: inherit; color: inherit; background: none; border: 0; padding: 0; border-radius: 0; }
button { white-space: nowrap; }
.grow { flex: 1; }
.title { height: 21px; flex: none; display: flex; justify-content: space-between; background: linear-gradient(100deg, #c9dcee 0, #bfd7ee 22%, #b2d0ee 24%, #b5d3f0 45%, #a9c8e9 58%, #b5d3f0 66%, #a6c5e6 80%, #b6d3ef 100%); color: #111; }
.title-text { font: 12px/21px Roboto, "Noto Sans", sans-serif; white-space: nowrap; }
.win { display: flex; height: 18px; margin-right: 2px; border: 1px solid #5a6b84; border-top: 0; border-radius: 0 0 5px 5px; overflow: hidden; }
.win button { width: 27px; background: linear-gradient(#dbe6f3, #b4c5da 45%, #9ab2ce 50%, #bfd3ea); border-right: 1px solid #5a6b84; display: grid; place-items: center; }
.win .close { width: 47px; border: 0; background: linear-gradient(#e2a08e, #cf604c 45%, #b93420 50%, #d3714e); }
.win svg { width: 14px; height: 12px; }
.menubar { height: 24px; flex: none; display: flex; align-items: stretch; background: linear-gradient(#555557, #3f3f41); border-top: 1px solid #3b3f45; border-bottom: 1px solid #222; font: 12px/22px Roboto, "Noto Sans", sans-serif; color: #f0f0f0; }
.item { padding: 0 13px; }
.item:first-child { padding-left: 0; }
.menubar .more { width: 11px; background: #5a5a5c; font-weight: bold; color: #111; }
.menubar .signin { display: flex; align-items: center; width: 120px; margin-left: 4px; padding: 0 5px 0 3px; background: #dcdcdc; color: #333; font: 13px/22px "Liberation Sans", sans-serif; }
.signin svg { width: 19px; height: 22px; margin-right: 4px; }
.tri { margin-left: auto; border: 5px solid transparent; border-top-color: #000; border-bottom: 0; }
.ws-label { width: 67px; margin-left: 19px; color: #c8c8c8; }
.drop { position: relative; display: block; background: #5a5a5c; }
.drop select { appearance: none; width: 100%; height: 100%; padding-left: 5px; display: block; outline: 0; }
.drop::after { content: ""; position: absolute; right: 6px; top: 50%; margin-top: -2px; border: 3px solid transparent; border-top: 5px solid #d8d8d8; border-bottom: 0; pointer-events: none; }
.drop.ws { width: 134px; margin-right: 2px; color: #d6d6d6; }
.ws select { padding-left: 4px; }
.tools { height: 33px; flex: none; display: flex; align-items: center; padding-left: 3px; background: #424244; }
.tools.second { padding-left: 0; }
.tool { position: relative; width: 32px; height: 32px; flex: none; display: grid; place-items: center; }
.tool svg { width: 32px; height: 32px; }
.tool b { position: absolute; left: 6px; bottom: 3px; font: 10px/10px Roboto, sans-serif; color: #fff; text-shadow: 0 0 2px #222, 0 0 2px #222; }
.tool.on { border: 1px solid #424244; border-top-width: 2px; background: #5787c5; border-radius: 4px; }
.tool.on svg { width: 30px; height: 30px; }
.fly { position: relative; }
.fly::after { content: ""; position: absolute; right: 1px; bottom: 1px; border-left: 4px solid transparent; border-bottom: 4px solid #eee; }
.sep { width: 2px; height: 18px; flex: none; margin: 0 2px; background: #1e1e1e; }
.second .sep { margin: 0 3px; }
.second .sep.tight { margin: 0 0 0 2px; }
.grip { width: 3px; height: 27px; flex: none; margin: 0 1px; background: repeating-linear-gradient(#999 0 1px, transparent 1px 2px); }
.second .grip { margin: 0 5px 0 4px; }
.tools .drop { height: 19px; flex: none; margin-bottom: 6px; }
.w-all { width: 68px; margin-right: 1px; }
.w-work { width: 68px; margin: 0 1px; }
.w-set { width: 118px; margin: 0 1px; }
.ribbon { height: 20px; flex: none; display: flex; align-items: center; gap: 44px; padding-left: 30px; background: #515153; border-top: 1px solid #686868; color: #a5a5a7; font: 12px/18px Roboto, "Noto Sans", sans-serif; }
.pill { width: 13px; height: 8px; margin-left: -12px; background: #e8e8e8; border-radius: 2px; display: grid; place-items: center; }
.pill i, .mini { border: 3px solid transparent; border-top: 3px solid #222; border-bottom: 0; }
.mini { margin-left: -39px; border-top-color: #bbb; }
.ribbon-foot { height: 20px; flex: none; background: linear-gradient(#48484a, #3c3c3e); border-top: 1px solid #333; border-bottom: 1px solid #2a2a2a; }
.main { flex: 1; min-height: 0; display: flex; background: #444446; }
.left { width: 18px; flex: none; display: flex; flex-direction: column; border-right: 1px solid #353537; overflow: hidden; }
.hgrip { height: 3px; flex: none; margin-top: 7px; background: repeating-linear-gradient(90deg, #a0a0a0 0 1px, transparent 1px 2px); -webkit-mask: linear-gradient(#000 1px, transparent 1px 2px, #000 2px); }
.chev { color: #5c60a0; font-size: 14px; line-height: 14px; padding-left: 7px; }
.c1 { margin-top: 27px; }
.c2 { margin: 2px 0 38px; }
.frozen { margin-top: 15px; border-top: 1px solid #303030; font-size: 10px; line-height: 20px; color: #f4f4f4; height: 21px; }
.band { height: 37px; background: linear-gradient(#4b4b4d 12px, #59595b 12px); }
.expand { height: 17px; background: #f0f0f0; display: grid; place-items: center; }
.expand i { border: 4px solid transparent; border-left: 4px solid #222; border-right: 0; }
.views { flex: 1; min-width: 0; margin: 6px 6px 25px 4px; display: grid; grid-template: 47px 1fr / 83px 1fr; gap: 5px 4px; }
.view { position: relative; overflow: hidden; background: #38383a; border: 1px solid #2d2d2f; min-width: 0; min-height: 0; }
.view svg { position: absolute; inset: -1px; width: calc(100% + 2px); height: calc(100% + 2px); }
.view p { position: relative; padding: 6px 0 0 4px; font: 11px/15px "Noto Sans", sans-serif; color: #d2d2d2; white-space: nowrap; }
.grid { stroke: #636365; fill: none; }
.view.active { border: 2px solid #746a30; background: linear-gradient(#1b1b1b, #2c2c2c 35%, #3a3a3a 60%, #4c4c4c); }
.view.active svg { inset: 0; width: 100%; height: 100%; }
.view.active p { padding: 5px 0 0 3px; }
.panel { width: 242px; flex: none; display: flex; flex-direction: column; border-left: 1px solid #343436; }
.tabs { display: flex; height: 27px; margin: 4px 46px 0 0; background: #3b3b3d; }
.tabs button { width: 32px; border-right: 1px solid #303032; display: grid; place-items: center; }
.tabs .cur { width: 28px; background: #444446; }
.tabs svg, .cats svg, .sm svg, .tag svg { width: 32px; height: 32px; margin: -8px; }
.cats { display: flex; gap: 2px; height: 22px; margin: 5px 0 0 3px; }
.cats button { width: 22px; height: 22px; display: grid; place-items: center; }
.cats .cur { background: #5787c5; border: 1px solid #6c93c8; border-radius: 3px; }
.prim { height: 20px; margin: 8px 4px 6px 2px; background: #616163; }
.roll { margin: 0 12px 3px 2px; background: #515153; border: 1px solid #5a5a5c; border-radius: 2px; }
.roll h2 { display: flex; align-items: center; height: 19px; padding: 0 7px 0 5px; font: bold 12px/19px "DejaVu Sans Condensed", sans-serif; color: #fff; }
.roll h2 i { margin-right: 7px; border: 3px solid transparent; border-top: 4px solid #c8c8c8; border-bottom: 0; }
.roll h2 span { width: 7px; height: 7px; margin: -4px 0 0 auto; background: repeating-linear-gradient(90deg, transparent 0 1px, #515153 1px 3px), repeating-linear-gradient(#aaa 0 1px, #515153 1px 3px); }
.auto { display: flex; align-items: center; height: 19px; padding-left: 65px; color: #878789; }
.auto input { position: absolute; opacity: 0; }
.auto svg { width: 10px; height: 10px; margin-right: 3px; }
.prims { display: grid; grid-template-columns: 67px 67px; gap: 4px 11px; padding: 0 0 5px 40px; }
.prims button, .key { height: 17px; background: #646466; border: 1px solid #5a5a5c; border-radius: 3px; line-height: 15px; color: #e2e2e2; box-shadow: 0 1px 0 #48484a; }
.name { display: flex; gap: 3px; padding: 6px 0 8px 38px; }
.name input { width: 131px; height: 20px; border: 1px solid #4d4d4f; background: #575759; }
.name button { width: 17px; height: 20px; background: #c6307e; border: 1px solid #111; }
.timeline { height: 26px; flex: none; border-top: 1px solid #151515; background: linear-gradient(90deg, #29292b 1137px, transparent 1137px); }
.timeline svg { display: block; width: 1137px; height: 25px; overflow: visible; }
.timeline text { font: 12px Roboto, "Noto Sans", sans-serif; fill: #b9b9b9; text-anchor: middle; }
.status { height: 57px; flex: none; display: flex; color: #e6e6e6; }
.prompt { width: 285px; flex: none; padding-top: 13px; }
.caret { display: block; width: 2px; height: 10px; background: #dfe4b0; }
.prompt p { margin: 13px 0 0 3px; color: #f0f0f0; white-space: nowrap; }
.coords { flex: 1; padding-top: 7px; }
.line { display: flex; align-items: center; height: 23px; }
.sm { width: 22px; height: 22px; flex: none; display: grid; place-items: center; }
.coords .sm { width: 27px; }
.coords label { width: 17px; margin-left: 10px; flex: none; }
.coords .sm + label { width: 15px; margin-left: 1px; }
.coords input { width: 57px; height: 17px; flex: none; padding-left: 3px; background: #5a5a5c; color: #858587; }
.gridsize { margin-left: 15px; white-space: nowrap; }
.tagline { padding-left: 312px; margin-top: 2px; gap: 4px; white-space: nowrap; }
.tag { width: 22px; height: 21px; flex: none; background: #4f7db9; border-radius: 3px; display: grid; place-items: center; }
.play { width: 119px; flex: none; padding-top: 7px; }
.vs { width: 2px; height: 16px; flex: none; margin: 0 1px; background: #1f1f1f; }
.play .line { height: 22px; }
.spin { position: relative; width: 68px; height: 16px; flex: none; background: #636365; }
.spin input { width: 56px; height: 16px; padding-left: 3px; display: block; }
.spin i { position: absolute; right: 4px; border: 3px solid transparent; }
.spin .up { top: 3px; border-top: 0; border-bottom: 4px solid #ddd; }
.spin .dn { bottom: 3px; border-bottom: 0; border-top: 4px solid #ddd; }
.big { width: 42px; height: 42px; flex: none; margin: 8px 5px 0 13px; background: #646466; border-radius: 3px; display: grid; place-items: center; }
.big svg { width: 34px; height: 34px; }
.keys { width: 165px; flex: none; margin-top: 8px; display: grid; grid-template: 20px 20px / 46px 1fr; gap: 3px 5px; }
.keys .key { height: 20px; text-align: center; }
.keys .drop { background: #646466; height: 19px; }
.kf { display: flex; gap: 4px; }
.kf .key { flex: 1; }
.kf .sm { height: 20px; }
.nav { width: 92px; flex: none; margin: 7px 10px 0 9px; display: grid; grid-template: 22px 22px / repeat(4, 23px); justify-items: center; row-gap: 1px; }
.taskbar { height: 1px; flex: none; display: flex; gap: 4px; padding-left: 67px; background: #3f5266; }
.taskbar i { width: 58px; background: #0c0f12; }
.quad { position: absolute; left: 385px; top: 155px; width: 210px; background: #454547; border: 1px solid #000; color: #a6a6a8; }
.qgroup { border-bottom: 1px solid #000; }
.qgroup:last-child { border-bottom: 0; }
.qgroup button { position: relative; display: block; width: 100%; height: 15px; padding: 1px 0 0 13px; line-height: 14px; text-align: left; }
.qgroup .off { color: #29292b; }
.qgroup .hot { color: #fff; }
.qhead { height: 14px; line-height: 13px; padding-right: 2px; text-align: right; font-weight: bold; border-bottom: 1px solid #000; background: linear-gradient(90deg, #3f7fdf 13px, #3e3e40 13px); }
.sub { position: absolute; right: 7px; top: 4px; border: 4px solid transparent; border-left: 5px solid #000; border-right: 0; }
.box { position: absolute; right: 1px; top: 4px; width: 9px; height: 8px; border: 1px solid #000; border-top-width: 3px; }
</style>
